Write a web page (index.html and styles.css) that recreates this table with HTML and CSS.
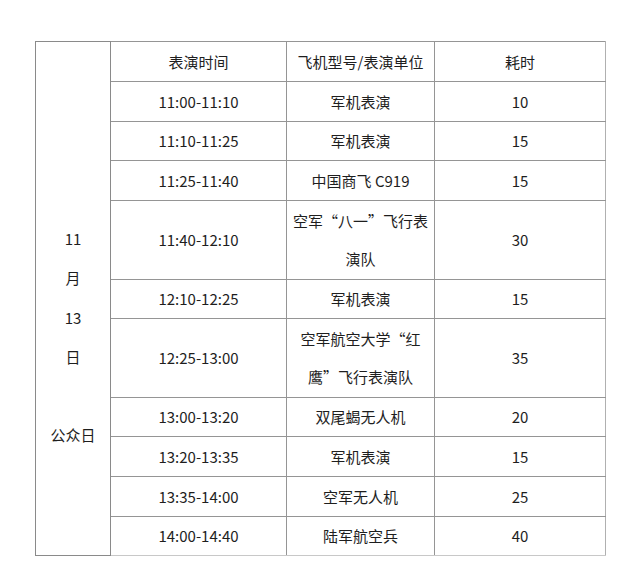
FILE: index.html
```html
<!DOCTYPE html>
<html lang="zh">
<head>
<meta charset="utf-8">
<link rel="stylesheet" href="styles.css">
</head>
<body>
<table class="schedule">
  <colgroup>
    <col class="c-date">
    <col class="c-time">
    <col class="c-unit">
    <col class="c-dur">
  </colgroup>
  <tr class="h40">
    <td class="date" rowspan="11">11<br>月<br>13<br>日<br><br>公众日</td>
    <td>表演时间</td>
    <td class="unit">飞机型号/表演单位</td>
    <td class="dur">耗时</td>
  </tr>
  <tr class="h40"><td>11:00-11:10</td><td class="unit">军机表演</td><td class="dur">10</td></tr>
  <tr class="h39"><td>11:10-11:25</td><td class="unit">军机表演</td><td class="dur">15</td></tr>
  <tr class="h40"><td>11:25-11:40</td><td class="unit">中国商飞 C919</td><td class="dur">15</td></tr>
  <tr class="h79"><td>11:40-12:10</td><td class="unit">空军“八一”飞行表<br>演队</td><td class="dur">30</td></tr>
  <tr class="h39"><td>12:10-12:25</td><td class="unit">军机表演</td><td class="dur">15</td></tr>
  <tr class="h79"><td>12:25-13:00</td><td class="unit">空军航空大学“红<br>鹰”飞行表演队</td><td class="dur">35</td></tr>
  <tr class="h39"><td>13:00-13:20</td><td class="unit">双尾蝎无人机</td><td class="dur">20</td></tr>
  <tr class="h40"><td>13:20-13:35</td><td class="unit">军机表演</td><td class="dur">15</td></tr>
  <tr class="h40"><td>13:35-14:00</td><td class="unit">空军无人机</td><td class="dur">25</td></tr>
  <tr class="h39"><td>14:00-14:40</td><td class="unit">陆军航空兵</td><td class="dur">40</td></tr>
</table>
</body>
</html>
```
FILE: styles.css
```css
html, body {
  margin: 0;
  padding: 0;
  background: #ffffff;
}

body {
  font-family: "Noto Sans CJK SC", "Open Sans", sans-serif;
  font-size: 15px;
  color: #1e1e1e;
}

.schedule {
  margin: 41px 0 0 35px;
  border-collapse: collapse;
  table-layout: fixed;
  width: 570px;
}

.c-date { width: 75px; }
.c-time { width: 176px; }
.c-unit { width: 148px; }
.c-dur { width: 171px; }

.schedule td {
  border: 1px solid #959595;
  text-align: center;
  vertical-align: middle;
  padding: 0;
  line-height: 36px;
}

.h39 { height: 39px; }
.h40 { height: 40px; }
.h79 { height: 79px; }

.h79 td.unit {
  line-height: 38.5px;
}

.schedule td.date {
  vertical-align: top;
  padding-top: 177px;
  line-height: 39.3px;
  border-color: #8a8a8a;
}

.schedule td.unit {
  border-left-color: #c4c4c4;
}

.schedule td.dur {
  border-left-color: #7a7a7a;
  border-right-color: #b0b0b0;
}

.schedule tr:last-child td {
  border-bottom-color: #c8c8c8;
}
```
